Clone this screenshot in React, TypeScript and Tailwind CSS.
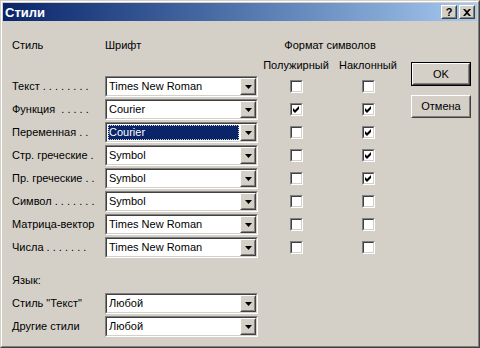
import React from "react";

const FONT = "font-['Liberation_Sans',Arial,sans-serif]";

function Raised({ children, className = "" }: { children?: React.ReactNode; className?: string }) {
  return (
    <div className={`flex border border-t-white border-l-white border-r-[#404040] border-b-[#404040] ${className}`}>
      <div className="flex-1 flex items-center justify-center border border-t-[#d4d0c8] border-l-[#d4d0c8] border-r-[#808080] border-b-[#808080] bg-[#d4d0c8]">
        {children}
      </div>
    </div>
  );
}

function Arrow() {
  return (
    <Raised className="w-[16px] h-full">
      <svg width="7" height="4" viewBox="0 0 7 4">
        <polygon points="0,0 7,0 3.5,4" fill="#000" />
      </svg>
    </Raised>
  );
}

function Combo({ text, selected = false }: { text: string; selected?: boolean }) {
  return (
    <div className="h-[21px] w-[153px] flex border border-t-[#808080] border-l-[#808080] border-r-white border-b-white">
      <div className="flex-1 flex border border-t-[#404040] border-l-[#404040] border-r-[#d4d0c8] border-b-[#d4d0c8] bg-white">
        <div className="flex-1 flex p-px">
          {selected ? (
            <div className="flex-1 flex items-center bg-[#0a246a] text-white pl-px outline outline-1 outline-dotted outline-[#d4d0c8] -outline-offset-1">
              {text}
            </div>
          ) : (
            <div className="flex-1 flex items-center pl-px">{text}</div>
          )}
        </div>
        <Arrow />
      </div>
    </div>
  );
}

function Check({ on }: { on: boolean }) {
  return (
    <div className="w-[13px] h-[13px] flex border border-t-[#808080] border-l-[#808080] border-r-white border-b-white">
      <div className="flex-1 flex items-center justify-center border border-t-[#404040] border-l-[#404040] border-r-[#d4d0c8] border-b-[#d4d0c8] bg-white">
        {on && (
          <svg width="7" height="7" viewBox="0 0 7 7">
            <path d="M0 2 L2 4 L6 0 L6 3 L2 7 L0 5 Z" fill="#000" />
          </svg>
        )}
      </div>
    </div>
  );
}

const rows: { label: string; font: string; b: boolean; i: boolean; sel?: boolean }[] = [
  { label: "Текст . . . . . . . .", font: "Times New Roman", b: false, i: false },
  { label: "Функция  . . . . .", font: "Courier", b: true, i: true },
  { label: "Переменная . .", font: "Courier", b: false, i: true, sel: true },
  { label: "Стр. греческие .", font: "Symbol", b: false, i: true },
  { label: "Пр. греческие . .", font: "Symbol", b: false, i: true },
  { label: "Символ . . . . . . .", font: "Symbol", b: false, i: false },
  { label: "Матрица-вектор", font: "Times New Roman", b: false, i: false },
  { label: "Числа . . . . . . .", font: "Times New Roman", b: false, i: false },
];

export default function App() {
  return (
    <div className={`w-[480px] h-[348px] bg-[#d4d0c8] text-black text-[11px] leading-[13px] ${FONT} flex border border-t-[#d4d0c8] border-l-[#d4d0c8] border-r-[#404040] border-b-[#404040]`}>
      <div className="flex-1 flex flex-col border border-t-white border-l-white border-r-[#808080] border-b-[#808080] p-px">
        {/* title bar */}
        <div className="h-[18px] flex items-center bg-linear-to-r from-[#0a246a] to-[#a6caf0] pl-[2px] pr-[2px]">
          <span className="text-white font-bold flex-1 text-[13px]">Стили</span>
          <Raised className="w-[16px] h-[14px]">
            <span className="font-bold text-[11px] leading-none">?</span>
          </Raised>
          <Raised className="w-[16px] h-[14px] ml-[2px]">
            <svg width="8" height="7" viewBox="0 0 8 7">
              <path d="M0 0 L2 0 L4 2 L6 0 L8 0 L5 3.5 L8 7 L6 7 L4 5 L2 7 L0 7 L3 3.5 Z" fill="#000" />
            </svg>
          </Raised>
        </div>

        <div className="flex-1 flex pl-[9px]">
          <div className="flex flex-col">
            <div className="grid grid-cols-[93px_153px_76px_68px] mt-[18px] h-[13px] items-center">
              <div>Стиль</div>
              <div>Шрифт</div>
              <div className="col-span-2 text-center">Формат символов</div>
            </div>
            <div className="grid grid-cols-[93px_153px_76px_68px] mt-[7px] h-[13px] items-center">
              <div />
              <div />
              <div className="text-center">Полужирный</div>
              <div className="text-center">Наклонный</div>
            </div>
            <div className="flex flex-col gap-[2px] mt-[4px]">
              {rows.map((r) => (
                <div key={r.label} className="grid grid-cols-[93px_153px_76px_68px] h-[21px] items-center">
                  <div className="whitespace-pre">{r.label}</div>
                  <Combo text={r.font} selected={r.sel} />
                  <div className="flex justify-center">
                    <Check on={r.b} />
                  </div>
                  <div className="flex justify-center">
                    <Check on={r.i} />
                  </div>
                </div>
              ))}
            </div>
            <div className="mt-[16px] h-[13px]">Язык:</div>
            <div className="flex flex-col gap-[2px] mt-[6px]">
              <div className="grid grid-cols-[93px_153px] h-[21px] items-center">
                <div className="whitespace-pre">Стиль "Текст"</div>
                <Combo text="Любой" />
              </div>
              <div className="grid grid-cols-[93px_153px] h-[21px] items-center">
                <div>Другие стили</div>
                <Combo text="Любой" />
              </div>
            </div>
          </div>

          <div className="flex flex-col ml-[9px] mt-[41px] w-[60px]">
            <div className="h-[24px] flex border border-black">
              <Raised className="flex-1">OK</Raised>
            </div>
            <Raised className="h-[23px] mt-[9px]">Отмена</Raised>
          </div>
        </div>
      </div>
    </div>
  );
}
